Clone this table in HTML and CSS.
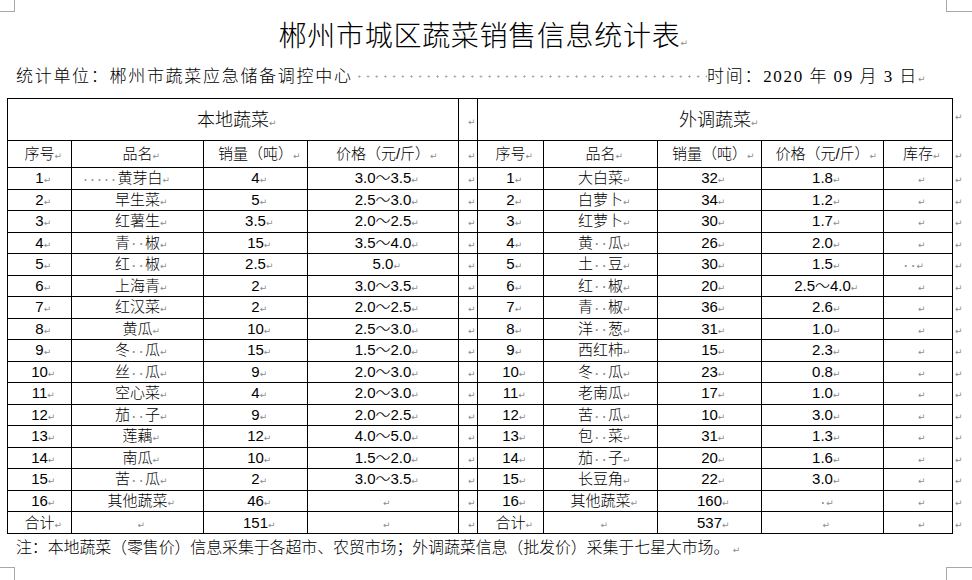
FILE: index.html
```html
<!DOCTYPE html>
<html lang="zh-CN">
<head>
<meta charset="utf-8">
<title>郴州市城区蔬菜销售信息统计表</title>
<link rel="stylesheet" href="styles.css">
</head>
<body>
<div class="page">
  <i class="crop tl"></i><i class="crop tr"></i><i class="crop bl"></i><i class="crop br"></i>
  <h1 class="title">郴州市城区蔬菜销售信息统计表</h1>
  <div class="sub">
    <span class="unit">统计单位：郴州市蔬菜应急储备调控中心</span>
    <span class="lead"></span>
    <span class="date">时间：<span class="lat">2020</span> 年 <span class="lat">09</span> 月 <span class="lat">3</span> 日</span>
  </div>
  <table class="grid">
    <colgroup>
      <col class="c64"><col class="c132"><col class="c104"><col class="c151"><col class="c19">
      <col class="c66"><col class="c114"><col class="c104"><col class="c122"><col class="c69"><col class="c20">
    </colgroup>
    <tr class="h1"><td colspan="4" class="big">本地蔬菜</td><td></td><td colspan="5" class="big">外调蔬菜</td><td class="e top"></td></tr>
    <tr class="h2"><td>序号</td><td>品名</td><td>销量（吨）</td><td>价格（元/斤）</td><td></td><td>序号</td><td>品名</td><td>销量（吨）</td><td>价格（元/斤）</td><td>库存</td><td class="e"></td></tr>
    <tr class="r"><td>1</td><td class="off"><b class="sp s5"></b>黄芽白</td><td>4</td><td>3.0～3.5</td><td></td><td>1</td><td>大白菜</td><td>32</td><td>1.8</td><td></td><td class="e"></td></tr>
    <tr class="r"><td>2</td><td>早生菜</td><td>5</td><td>2.5～3.0</td><td></td><td>2</td><td>白萝卜</td><td>34</td><td>1.2</td><td></td><td class="e"></td></tr>
    <tr class="r"><td>3</td><td>红薯生</td><td>3.5</td><td>2.0～2.5</td><td></td><td>3</td><td>红萝卜</td><td>30</td><td>1.7</td><td></td><td class="e"></td></tr>
    <tr class="r"><td>4</td><td>青<b class="sp"></b>椒</td><td>15</td><td>3.5～4.0</td><td></td><td>4</td><td>黄<b class="sp"></b>瓜</td><td>26</td><td>2.0</td><td></td><td class="e"></td></tr>
    <tr class="r"><td>5</td><td>红<b class="sp"></b>椒</td><td>2.5</td><td>5.0</td><td></td><td>5</td><td>土<b class="sp"></b>豆</td><td>30</td><td>1.5</td><td class="off2"><b class="sp"></b></td><td class="e"></td></tr>
    <tr class="r"><td>6</td><td>上海青</td><td>2</td><td>3.0～3.5</td><td></td><td>6</td><td>红<b class="sp"></b>椒</td><td>20</td><td>2.5～4.0</td><td></td><td class="e"></td></tr>
    <tr class="r"><td>7</td><td>红汉菜</td><td>2</td><td>2.0～2.5</td><td></td><td>7</td><td>青<b class="sp"></b>椒</td><td>36</td><td>2.6</td><td></td><td class="e"></td></tr>
    <tr class="r"><td>8</td><td>黄瓜</td><td>10</td><td>2.5～3.0</td><td></td><td>8</td><td>洋<b class="sp"></b>葱</td><td>31</td><td>1.0</td><td></td><td class="e"></td></tr>
    <tr class="r"><td>9</td><td>冬<b class="sp"></b>瓜</td><td>15</td><td>1.5～2.0</td><td></td><td>9</td><td>西红柿</td><td>15</td><td>2.3</td><td></td><td class="e"></td></tr>
    <tr class="r"><td>10</td><td>丝<b class="sp"></b>瓜</td><td>9</td><td>2.0～3.0</td><td></td><td>10</td><td>冬<b class="sp"></b>瓜</td><td>23</td><td>0.8</td><td></td><td class="e"></td></tr>
    <tr class="r"><td>11</td><td>空心菜</td><td>4</td><td>2.0～3.0</td><td></td><td>11</td><td>老南瓜</td><td>17</td><td>1.0</td><td></td><td class="e"></td></tr>
    <tr class="r"><td>12</td><td>茄<b class="sp"></b>子</td><td>9</td><td>2.0～2.5</td><td></td><td>12</td><td>苦<b class="sp"></b>瓜</td><td>10</td><td>3.0</td><td></td><td class="e"></td></tr>
    <tr class="r"><td>13</td><td>莲藕</td><td>12</td><td>4.0～5.0</td><td></td><td>13</td><td>包<b class="sp"></b>菜</td><td>31</td><td>1.3</td><td></td><td class="e"></td></tr>
    <tr class="r"><td>14</td><td>南瓜</td><td>10</td><td>1.5～2.0</td><td></td><td>14</td><td>茄<b class="sp"></b>子</td><td>20</td><td>1.6</td><td></td><td class="e"></td></tr>
    <tr class="r"><td>15</td><td>苦<b class="sp"></b>瓜</td><td>2</td><td>3.0～3.5</td><td></td><td>15</td><td>长豆角</td><td>22</td><td>3.0</td><td></td><td class="e"></td></tr>
    <tr class="r"><td>16</td><td>其他蔬菜</td><td>46</td><td></td><td></td><td>16</td><td>其他蔬菜</td><td>160</td><td><b class="sp s1"></b></td><td></td><td class="e"></td></tr>
    <tr class="r"><td>合计</td><td></td><td>151</td><td></td><td></td><td>合计</td><td></td><td>537</td><td></td><td></td><td class="e"></td></tr>
  </table>
  <p class="note">注：本地蔬菜（零售价）信息采集于各超市、农贸市场；外调蔬菜信息（批发价）采集于七星大市场。 </p>
</div>
</body>
</html>
```

FILE: styles.css
```css
* { box-sizing: border-box; }
html, body { margin: 0; padding: 0; background: #fff; }
body { font-family: "Noto Sans CJK SC", "Noto Sans", sans-serif; font-weight: 300; color: #000; }

.page { position: relative; width: 972px; height: 580px; overflow: hidden; }

.crop { position: absolute; display: block; border: 0 solid #a8a8a8; }
.tl { left: 0; top: 0; width: 15px; height: 12px; border-right-width: 1px; border-bottom-width: 1px; }
.tr { left: 946px; top: 0; width: 26px; height: 12px; border-left-width: 1px; border-bottom-width: 1px; }
.bl { left: 0; top: 567px; width: 15px; height: 13px; border-right-width: 1px; border-top-width: 1px; }
.br { left: 946px; top: 567px; width: 26px; height: 13px; border-left-width: 1px; border-top-width: 1px; }

.title {
  margin: 16px 0 0 7px;
  width: 945px;
  font-size: 28px;
  font-weight: 300;
  line-height: 36px;
  letter-spacing: 0.7px;
  text-align: center;
}

.sub {
  display: flex;
  align-items: baseline;
  margin: 10.5px 0 0 16px;
  width: 902px;
  font-size: 17px;
  line-height: 24px;
  letter-spacing: 1.7px;
}
.unit, .date { white-space: nowrap; }
.lat { font-family: "Liberation Serif", serif; font-weight: normal; }
.lead {
  flex: 1;
  align-self: stretch;
  background-image: radial-gradient(circle, #9a9a9a 0 0.8px, transparent 1.3px);
  background-size: 8.7px 3px;
  background-position: 2px 12px;
  background-repeat: repeat-x;
}

.title::after, .date::after, .note::after, .grid td::after {
  content: "↵";
  display: inline-block;
  width: 0;
  font-family: "DejaVu Sans", sans-serif;
  font-size: 9px;
  font-weight: normal;
  letter-spacing: 0;
  color: #8c8c8c;
  line-height: 1;
}

.grid {
  margin: 9.5px 0 0 7px;
  border-collapse: collapse;
  table-layout: fixed;
  width: 965px;
  font-family: "Liberation Sans", "Noto Sans CJK SC", sans-serif;
  font-size: 15px;
}
.c64 { width: 64px; }
.c132 { width: 132px; }
.c104 { width: 104px; }
.c151 { width: 151px; }
.c19 { width: 19px; }
.c66 { width: 66px; }
.c114 { width: 114px; }
.c122 { width: 122px; }
.c69 { width: 69px; }
.c20 { width: 20px; }

.grid td {
  border: 1px solid #000;
  padding: 0;
  text-align: center;
  vertical-align: middle;
  line-height: 18px;
  white-space: nowrap;
}
.grid td.e { border: 0; text-align: left; padding-left: 2px; }
.grid td.top { vertical-align: top; padding-top: 7px; }
.h1 td { height: 42px; }
.h2 td { height: 27px; }
.r td { height: 21.53px; }
.grid td.big { font-size: 18px; }
.grid td.off { padding-right: 30px; }
.grid td.off2 { padding-right: 18px; }

.sp {
  display: inline-block;
  width: 15px;
  height: 10px;
  vertical-align: middle;
  background-image: radial-gradient(circle, #9a9a9a 0 0.8px, transparent 1.3px);
  background-size: 7.5px 4px;
  background-position: 0 60%;
  background-repeat: repeat-x;
}
.sp.s5 { width: 35px; background-size: 7px 4px; }
.sp.s1 { width: 7.5px; }

.note {
  margin: 1px 0 0 16px;
  font-size: 16px;
  letter-spacing: -0.15px;
  line-height: 22px;
}
```
